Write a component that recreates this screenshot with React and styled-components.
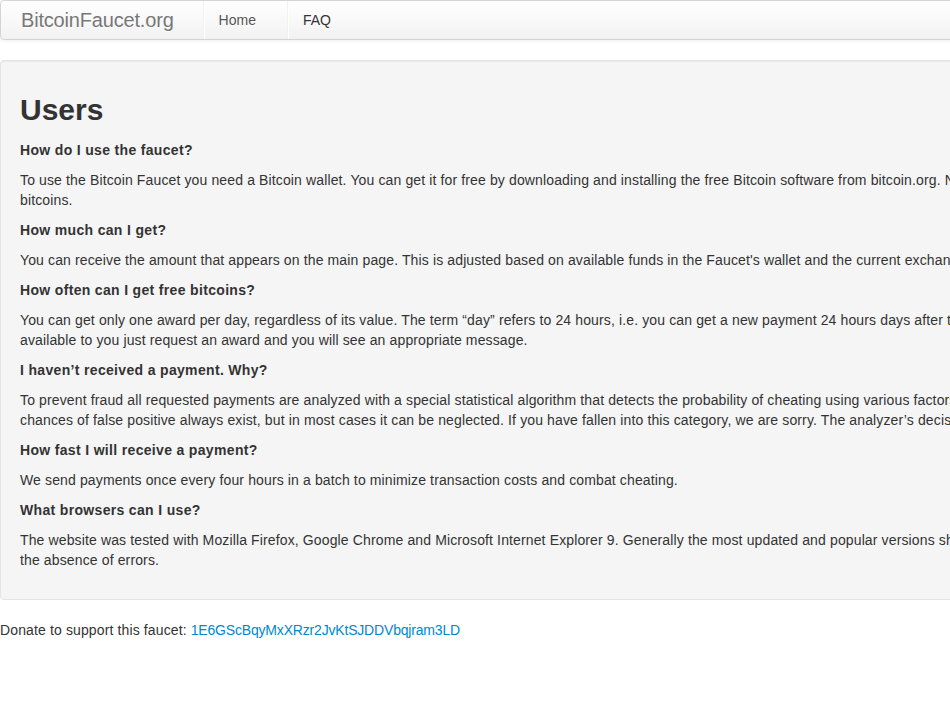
import styled, { createGlobalStyle } from 'styled-components'

const GlobalStyle = createGlobalStyle`
  html {
    overflow-x: hidden;
  }
  body {
    margin: 0;
    font-family: 'Liberation Sans', Arial, sans-serif;
    font-size: 14px;
    line-height: 20px;
    color: #333;
    background: #fff;
  }
`

const questions = [
  {
    q: 'How do I use the faucet?',
    a: 'To use the Bitcoin Faucet you need a Bitcoin wallet. You can get it for free by downloading and installing the free Bitcoin software from bitcoin.org. Next, use the form to get free bitcoins.',
  },
  {
    q: 'How much can I get?',
    a: "You can receive the amount that appears on the main page. This is adjusted based on available funds in the Faucet's wallet and the current exchange rate.",
  },
  {
    q: 'How often can I get free bitcoins?',
    a: 'You can get only one award per day, regardless of its value. The term \u201cday\u201d refers to 24 hours, i.e. you can get a new payment 24 hours days after the last one. To check if it is available to you just request an award and you will see an appropriate message.',
  },
  {
    q: 'I haven\u2019t received a payment. Why?',
    a: 'To prevent fraud all requested payments are analyzed with a special statistical algorithm that detects the probability of cheating using various factors. Since nothing is perfect, chances of false positive always exist, but in most cases it can be neglected. If you have fallen into this category, we are sorry. The analyzer\u2019s decision is final.',
  },
  {
    q: 'How fast I will receive a payment?',
    a: 'We send payments once every four hours in a batch to minimize transaction costs and combat cheating.',
  },
  {
    q: 'What browsers can I use?',
    a: "The website was tested with Mozilla Firefox, Google Chrome and Microsoft Internet Explorer 9. Generally the most updated and popular versions should work, we can't guarantee the absence of errors.",
  },
]

const App = () => {
  return (
    <>
      <GlobalStyle />
      <Container>
        <Navbar>
          <Brand href='#'>BitcoinFaucet.org</Brand>
          <Divider $first />
          <NavLink href='#'>Home</NavLink>
          <Divider />
          <NavLink href='#' $active>
            FAQ
          </NavLink>
        </Navbar>
        <Well>
          <Title>Users</Title>
          {questions.map((item) => (
            <div key={item.q}>
              <Question>{item.q}</Question>
              <Answer>{item.a}</Answer>
            </div>
          ))}
        </Well>
        <Donate>
          <span>Donate to support this faucet:</span>{' '}
          <a href='#'>1E6GScBqyMxXRzr2JvKtSJDDVbqjram3LD</a>
        </Donate>
      </Container>
    </>
  )
}

const Container = styled.div`
  width: 1170px;
`

const Navbar = styled.nav`
  display: flex;
  align-items: stretch;
  height: 38px;
  margin-bottom: 20px;
  background: linear-gradient(to bottom, #ffffff, #f2f2f2);
  border: 1px solid #d4d4d4;
  border-radius: 4px;
  box-shadow: 0 1px 4px rgba(0, 0, 0, 0.065);
`

const Brand = styled.a`
  display: flex;
  align-items: center;
  padding: 0 20px;
  font-size: 20px;
  font-weight: 200;
  letter-spacing: -0.18px;
  color: #777;
  text-decoration: none;
  text-shadow: 0 1px 0 #fff;
`

const Divider = styled.span`
  width: 0;
  margin-left: ${(p) => (p.$first ? '9px' : '0')};
  border-left: 1px solid #f2f2f2;
  border-right: 1px solid #fff;
`

const NavLink = styled.a`
  display: flex;
  align-items: center;
  padding: 0 31px 0 14px;
  color: ${(p) => (p.$active ? '#333' : '#555')};
  text-decoration: none;
  text-shadow: 0 1px 0 #fff;
`

const Well = styled.section`
  padding: 19px;
  margin-bottom: 20px;
  background: #f5f5f5;
  border: 1px solid #e3e3e3;
  border-radius: 4px;
  box-shadow: inset 0 1px 1px rgba(0, 0, 0, 0.05);
`

const Title = styled.h1`
  margin: 10px 0;
  font-size: 30px;
  line-height: 40px;
  font-weight: bold;
  color: #333;
`

const Question = styled.h5`
  margin: 10px 0;
  font-size: 14px;
  line-height: 20px;
  font-weight: bold;
  letter-spacing: 0.33px;
`

const Answer = styled.p`
  margin: 0 0 10px;
  letter-spacing: 0.13px;
`

const Donate = styled.p`
  margin: 0 0 10px;

  span {
    letter-spacing: 0.13px;
  }

  a {
    color: #0088cc;
    text-decoration: none;
    letter-spacing: -0.18px;
  }
`

export default App
